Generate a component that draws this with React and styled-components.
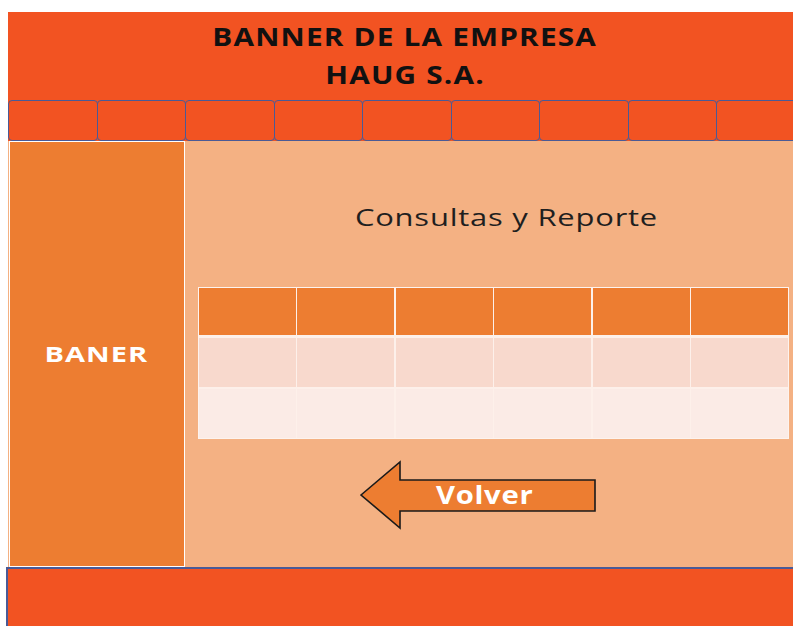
import React from "react";
import styled, { createGlobalStyle } from "styled-components";

const Global = createGlobalStyle`
  html, body { margin: 0; padding: 0; background: #ffffff; overflow: hidden; }
  body { font-family: "Open Sans", "Liberation Sans", sans-serif; }
`;

const Page = styled.div`
  width: 793px;
  height: 626px;
  overflow: hidden;
  padding: 12px 0 0 8px;
  box-sizing: border-box;
`;

const Frame = styled.div`
  width: 794px;
  display: flex;
  flex-direction: column;
`;

const Banner = styled.header`
  height: 88px;
  background: #f25322;
  display: flex;
  flex-direction: column;
  align-items: center;
  justify-content: center;
  padding-bottom: 2px;
  box-sizing: border-box;
`;

const Wide = styled.span`
  display: inline-block;
  transform: scaleX(${(p) => p.$sx || 1.15});
  transform-origin: center;
`;

const BannerLine = styled.div`
  font-weight: 700;
  font-size: 25px;
  line-height: 38px;
  color: #111;
  letter-spacing: 1px;
`;

const Nav = styled.nav`
  height: 41px;
  display: flex;
  background: #f25322;
`;

const NavCell = styled.div`
  flex: 0 0 89.5px;
  box-sizing: border-box;
  border: 1.5px solid #4a5a96;
  border-radius: 4px;
  margin-right: -1px;
  background: #f25322;
`;

const Body = styled.div`
  height: 426px;
  display: flex;
  background: #f4b183;
`;

const Sidebar = styled.aside`
  width: 176px;
  margin-left: 1px;
  box-sizing: border-box;
  border: 1.5px solid #ffffff;
  background: #ed7d31;
  display: flex;
  align-items: center;
  justify-content: center;
  padding-right: 2px;
  padding-bottom: 2px;
`;

const SideLabel = styled.span`
  color: #ffffff;
  font-weight: 700;
  font-size: 22px;
  letter-spacing: 0.8px;
`;

const Main = styled.main`
  flex: 1;
  display: flex;
  flex-direction: column;
  align-items: flex-start;
  padding: 56px 0 0 13px;
  box-sizing: border-box;
`;

const Title = styled.h1`
  margin: 0;
  align-self: stretch;
  padding-left: 12px;
  text-align: center;
  font-weight: 400;
  font-size: 24px;
  line-height: 40px;
  letter-spacing: 0.6px;
  color: #1f1f1f;
`;

const Table = styled.div`
  margin-top: 50px;
  width: 591px;
  display: grid;
  grid-template-columns: repeat(6, 1fr);
  gap: 1.5px;
  background: #fdf0ea;
  border: 1.5px solid #fdf3ee;
  box-sizing: border-box;
`;

const Cell = styled.div`
  height: ${(p) => (p.$row === 0 ? 47 : 49)}px;
  background: ${(p) => (p.$row === 0 ? "#ed7d31" : p.$row === 1 ? "#f8d9cd" : "#fbebe6")};
  ${(p) => (p.$row === 0 ? "margin-bottom: 1.5px;" : "")}
`;

const BackButton = styled.button`
  position: relative;
  margin: 21px 0 0 160px;
  width: 242px;
  height: 70px;
  padding: 0 0 2px 12px;
  border: none;
  background: transparent;
  cursor: pointer;
  display: flex;
  align-items: center;
  justify-content: center;
  box-sizing: border-box;
`;

const ArrowShape = styled.svg`
  position: absolute;
  inset: 0;
`;

const BackLabel = styled.span`
  position: relative;
  color: #ffffff;
  font-family: "Open Sans", "Liberation Sans", sans-serif;
  font-weight: 700;
  font-size: 25px;
  letter-spacing: 0.6px;
`;

const Footer = styled.footer`
  margin-left: -2px;
  height: 70px;
  background: #f25322;
  border-top: 2px solid #4a5a96;
  border-left: 2px solid #4a5a96;
`;

const rows = [0, 1, 2];
const cols = [0, 1, 2, 3, 4, 5];

export default function App() {
  return (
    <>
      <Global />
      <Page>
        <Frame>
          <Banner>
            <BannerLine>
              <Wide $sx={1.19}>BANNER DE LA EMPRESA</Wide>
            </BannerLine>
            <BannerLine>
              <Wide $sx={1.19}>HAUG S.A.</Wide>
            </BannerLine>
          </Banner>
          <Nav>
            {Array.from({ length: 9 }).map((_, i) => (
              <NavCell key={i} />
            ))}
          </Nav>
          <Body>
            <Sidebar>
              <SideLabel>
                <Wide $sx={1.32}>BANER</Wide>
              </SideLabel>
            </Sidebar>
            <Main>
              <Title>
                <Wide $sx={1.29}>Consultas y Reporte</Wide>
              </Title>
              <Table>
                {rows.map((r) =>
                  cols.map((c) => <Cell key={`${r}-${c}`} $row={r} />)
                )}
              </Table>
              <BackButton>
                <ArrowShape width="242" height="70" viewBox="0 0 242 70">
                  <polygon
                    points="3,35 42,2 42,20 237,20 237,51 42,51 42,68"
                    fill="#ed7d31"
                    stroke="#1a1a1a"
                    strokeWidth="1.6"
                    strokeLinejoin="miter"
                  />
                </ArrowShape>
                <BackLabel>
                  <Wide $sx={1.17}>Volver</Wide>
                </BackLabel>
              </BackButton>
            </Main>
          </Body>
          <Footer />
        </Frame>
      </Page>
    </>
  );
}
